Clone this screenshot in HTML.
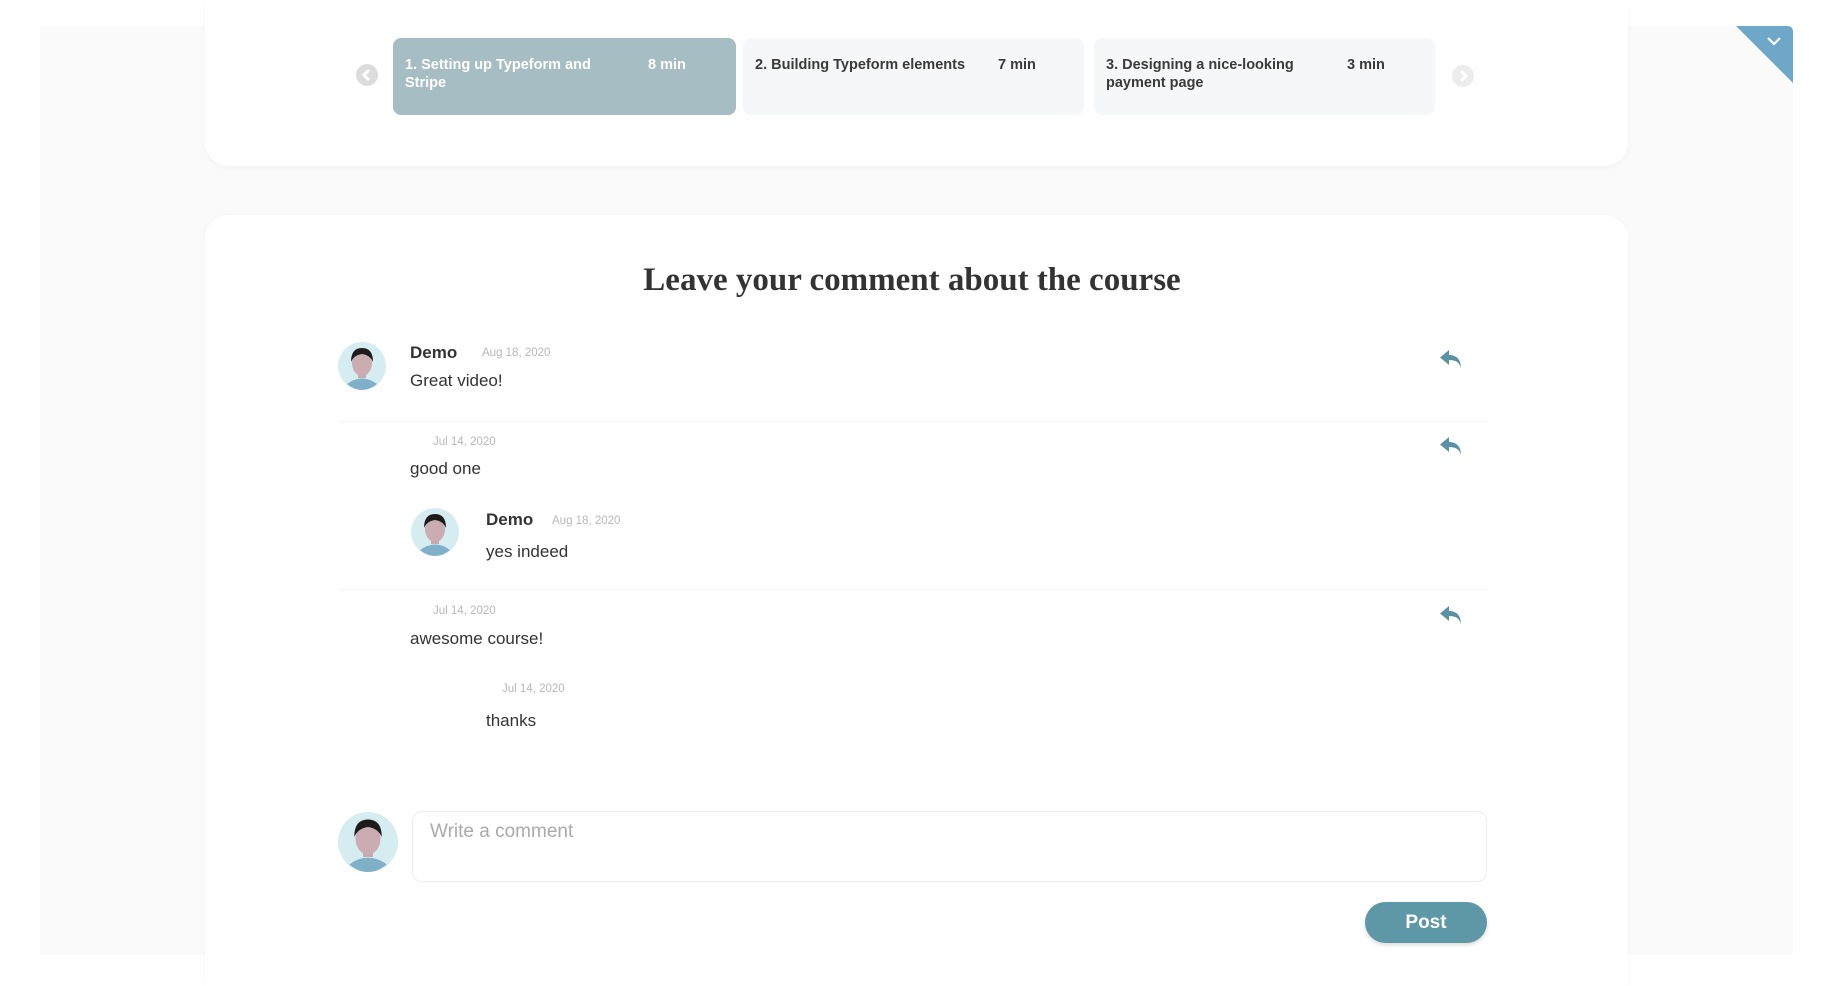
<!DOCTYPE html>
<html><head><meta charset="utf-8"><style>
*{margin:0;padding:0;box-sizing:border-box}
body{width:1844px;height:986px;background:#fff;position:relative;overflow:hidden;font-family:"Liberation Sans",sans-serif;color:#333}
.abs{position:absolute}
.bg{left:40px;top:26px;width:1753px;height:929px;background:#fafafa}
.card{background:#fff;left:205px;width:1423px;box-shadow:0 2px 8px rgba(0,0,0,.03)}
.tab{top:38px;height:77px;border-radius:8px;background:#f6f7f8;font-size:14.5px;font-weight:bold;color:#3a3a3a;padding:18px 12px;line-height:18px}
.tab .m{position:absolute;top:18px}
.name{font-size:17px;font-weight:bold;color:#333}
.date{font-size:11.5px;color:#b8b8b8}
.txt{font-size:17px;color:#333}
.sep{left:339px;width:1148px;height:1px;background:#f5f5f5}
</style></head><body>
<div class="abs bg"></div>
<div class="abs card" style="top:0;height:166px;border-radius:0 0 24px 24px"></div>
<div class="abs card" style="top:215px;height:771px;border-radius:24px 24px 0 0"></div>

<svg class="abs" style="left:356px;top:64px" width="22" height="22" viewBox="0 0 22 22"><circle cx="11" cy="11" r="11" fill="#dcdcdc"/><path d="M13 6l-5 5 5 5" stroke="#fff" stroke-width="3" fill="none"/></svg>
<svg class="abs" style="left:1452px;top:65px" width="22" height="22" viewBox="0 0 22 22"><circle cx="11" cy="11" r="11" fill="#ececec"/><path d="M9 6l5 5-5 5" stroke="#fff" stroke-width="3" fill="none"/></svg>

<div class="abs tab" style="left:393px;width:343px;background:#a5bdc3;color:#fff">1. Setting up Typeform and<br>Stripe<span class="m" style="left:255px">8 min</span></div>
<div class="abs tab" style="left:743px;width:341px">2. Building Typeform elements<span class="m" style="left:255px">7 min</span></div>
<div class="abs tab" style="left:1094px;width:341px">3. Designing a nice-looking<br>payment page<span class="m" style="left:253px">3 min</span></div>

<svg class="abs" style="left:1736px;top:26px" width="57" height="57" viewBox="0 0 57 57"><path d="M0 0H51Q57 0 57 6V57Z" fill="#6fa7c8"/><path d="M32 12l6 6 6-6" stroke="#fff" stroke-width="2.2" fill="none"/></svg>

<div class="abs" style="left:0;width:1824px;top:262px;text-align:center;font-family:'Liberation Serif',serif;font-weight:bold;font-size:33px;color:#333">Leave your comment about the course</div>

<svg width="0" height="0" style="position:absolute"><defs>
<g id="av"><circle cx="24" cy="24" r="24" fill="#d5ecf1"/><path d="M9 42q15-11 30 0q-7 6-15 6t-15-6z" fill="#7fb0c8"/><rect x="20" y="28" width="8" height="8" fill="#c9a9ad"/><ellipse cx="24" cy="21" rx="10" ry="13" fill="#cbadb1"/><path d="M13 20q0-14 11-14t11 14q-3-7-11-8q-8 1-11 8z" fill="#1c1c1c"/></g>
<g id="rp"><path d="M11 2L2 9.5l9 7.5V12c6 0 10 1.5 12 8 0-9-5-13-12-13z" fill="#5a91a6"/></g>
</defs></svg>

<svg class="abs" style="left:338px;top:342px" width="48" height="48"><use href="#av"/></svg>
<div class="abs name" style="left:410px;top:343px">Demo</div>
<div class="abs date" style="left:482px;top:347px">Aug 18, 2020</div>
<div class="abs txt" style="left:410px;top:371px">Great video!</div>
<svg class="abs" style="left:1438px;top:348px" width="26" height="24"><use href="#rp"/></svg>

<div class="abs sep" style="top:421px"></div>
<div class="abs date" style="left:433px;top:436px">Jul 14, 2020</div>
<div class="abs txt" style="left:410px;top:459px">good one</div>
<svg class="abs" style="left:1438px;top:435px" width="26" height="24"><use href="#rp"/></svg>

<svg class="abs" style="left:411px;top:508px" width="48" height="48"><use href="#av"/></svg>
<div class="abs name" style="left:486px;top:510px">Demo</div>
<div class="abs date" style="left:552px;top:515px">Aug 18, 2020</div>
<div class="abs txt" style="left:486px;top:542px">yes indeed</div>

<div class="abs sep" style="top:589px"></div>
<div class="abs date" style="left:433px;top:605px">Jul 14, 2020</div>
<div class="abs txt" style="left:410px;top:629px">awesome course!</div>
<svg class="abs" style="left:1438px;top:604px" width="26" height="24"><use href="#rp"/></svg>

<div class="abs date" style="left:502px;top:683px">Jul 14, 2020</div>
<div class="abs txt" style="left:486px;top:711px">thanks</div>

<svg class="abs" style="left:338px;top:812px" width="60" height="60" viewBox="0 0 48 48"><use href="#av"/></svg>
<div class="abs" style="left:412px;top:811px;width:1075px;height:71px;border:1px solid #ececec;border-radius:10px;background:#fff"></div>
<div class="abs" style="left:430px;top:821px;font-size:19px;color:#aaa">Write a comment</div>
<div class="abs" style="left:1365px;top:902px;width:122px;height:41px;border-radius:21px;background:#5e97a6;color:#fff;font-weight:bold;font-size:19px;text-align:center;line-height:41px;box-shadow:0 2px 4px rgba(0,0,0,.15)">Post</div>
</body></html>
